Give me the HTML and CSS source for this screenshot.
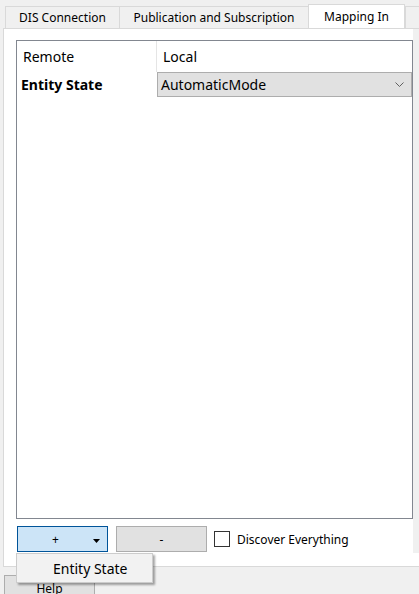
FILE: index.html
```html
<!DOCTYPE html>
<html>
<head>
<meta charset="utf-8">
<link rel="stylesheet" href="styles.css">
</head>
<body>
<div class="window">
  <div class="tabbar">
    <div class="tab tab-dis">DIS Connection</div>
    <div class="tab tab-pub">Publication and Subscription</div>
    <div class="tab tab-active">Mapping In</div>
    <div class="tab tab-more"></div>
  </div>
  <div class="pane">
    <div class="main">
      <div class="table">
        <div class="thead">
          <div class="th col1">Remote</div>
          <div class="th col2">Local</div>
        </div>
        <div class="trow">
          <div class="td col1 bold">Entity State</div>
          <div class="td col2">
            <div class="combo">
              <span class="combo-text">AutomaticMode</span>
              <svg class="chev" width="9" height="6" viewBox="0 0 9 6"><polyline points="0.5,0.5 4.5,4.5 8.5,0.5" fill="none" stroke="#606060" stroke-width="1"/></svg>
            </div>
          </div>
        </div>
      </div>
      <div class="actions">
        <div class="btn btn-add">
          <span class="btn-label">+</span>
          <svg class="tri" width="7" height="4" viewBox="0 0 7 4"><polygon points="0,0 7,0 3.5,4" fill="#000"/></svg>
        </div>
        <div class="btn btn-remove">-</div>
        <label class="check">
          <span class="box"></span>
          <span class="check-text">Discover Everything</span>
        </label>
      </div>
    </div>
    <div class="strip"></div>
  </div>
  <div class="footer">
    <div class="btn btn-help">Help</div>
  </div>
  <div class="menu">
    <div class="menu-item">Entity State</div>
  </div>
</div>
</body>
</html>
```
FILE: styles.css
```css
html, body {
  margin: 0;
  padding: 0;
  background: #f0f0f0;
  overflow: hidden;
}
body {
  width: 419px;
  height: 594px;
  font-family: "Noto Sans", "Open Sans", sans-serif;
  font-size: 12px;
  color: #000;
}
.window {
  position: relative;
  width: 419px;
  height: 594px;
  overflow: hidden;
}
.tabbar {
  height: 28px;
  display: flex;
  align-items: flex-end;
  padding-left: 5px;
  box-sizing: border-box;
  overflow: hidden;
}
.tab {
  box-sizing: border-box;
  flex: none;
  height: 22px;
  border: 1px solid #d9d9d9;
  border-bottom: none;
  background: #f0f0f0;
  display: flex;
  align-items: center;
  justify-content: center;
  white-space: nowrap;
}
.tab-dis { width: 115px; }
.tab-pub { width: 190px; margin-left: -1px; }
.tab-active {
  width: 97px;
  margin-left: -1px;
  height: 25px;
  margin-bottom: -1px;
  background: #fff;
  position: relative;
  z-index: 1;
  padding-bottom: 1px;
}
.tab-more { width: 30px; margin-left: 0; }
.pane {
  box-sizing: border-box;
  margin-left: 3px;
  height: 539px;
  border: 1px solid #d9d9d9;
  border-right: none;
  background: #fff;
  display: flex;
}
.main {
  flex: 1;
  padding: 11px 0 0 12px;
  display: flex;
  flex-direction: column;
}
.strip {
  width: 6px;
  height: 524px;
  background: #f0f0f0;
  flex: none;
}
.table {
  box-sizing: border-box;
  width: 397px;
  height: 479px;
  border: 1px solid #828790;
  font-size: 14px;
}
.thead, .trow {
  display: flex;
}
.thead { height: 31px; }
.trow { height: 25px; }
.th, .td {
  display: flex;
  align-items: center;
  box-sizing: border-box;
}
.col1 { width: 140px; flex: none; }
.col2 { flex: 1; }
.thead .col1 { border-right: 1px solid #e5e5e5; padding-left: 6px; }
.thead .col2 { padding-left: 6px; }
.trow .col1 { padding-left: 4px; }
.bold { font-weight: bold; }
.combo {
  box-sizing: border-box;
  width: 255px;
  height: 25px;
  background: #e1e1e1;
  border: 1px solid #adadad;
  display: flex;
  align-items: center;
  justify-content: space-between;
  padding: 0 7px 0 3px;
}
.chev { display: block; }
.actions {
  margin-top: 7px;
  display: flex;
  align-items: center;
  height: 26px;
}
.btn {
  box-sizing: border-box;
  flex: none;
  width: 91px;
  height: 26px;
  border: 1px solid #adadad;
  background: #e1e1e1;
  display: flex;
  align-items: center;
  justify-content: center;
}
.btn-add {
  margin-left: 1px;
  background: #cce4f7;
  border-color: #005499;
  position: relative;
}
.btn-label { margin-right: 14px; }
.tri {
  position: absolute;
  right: 7px;
  top: 12px;
}
.btn-remove { margin-left: 8px; }
.check {
  margin-left: 7px;
  display: flex;
  align-items: center;
}
.box {
  box-sizing: border-box;
  width: 16px;
  height: 16px;
  border: 1px solid #333;
  background: #fff;
}
.check-text { margin-left: 7px; }
.footer {
  padding: 8px 0 0 4px;
}
.btn-help {
  height: 28px;
  align-items: flex-start;
  padding-top: 4px;
}
.menu {
  position: absolute;
  left: 16px;
  top: 553px;
  box-sizing: border-box;
  width: 137px;
  height: 30px;
  background: #f2f2f2;
  border: 1px solid #cccccc;
  box-shadow: 2px 2px 2px rgba(0,0,0,0.35);
  display: flex;
  align-items: center;
  z-index: 5;
}
.menu-item {
  padding-left: 36px;
  font-size: 14px;
}
```
